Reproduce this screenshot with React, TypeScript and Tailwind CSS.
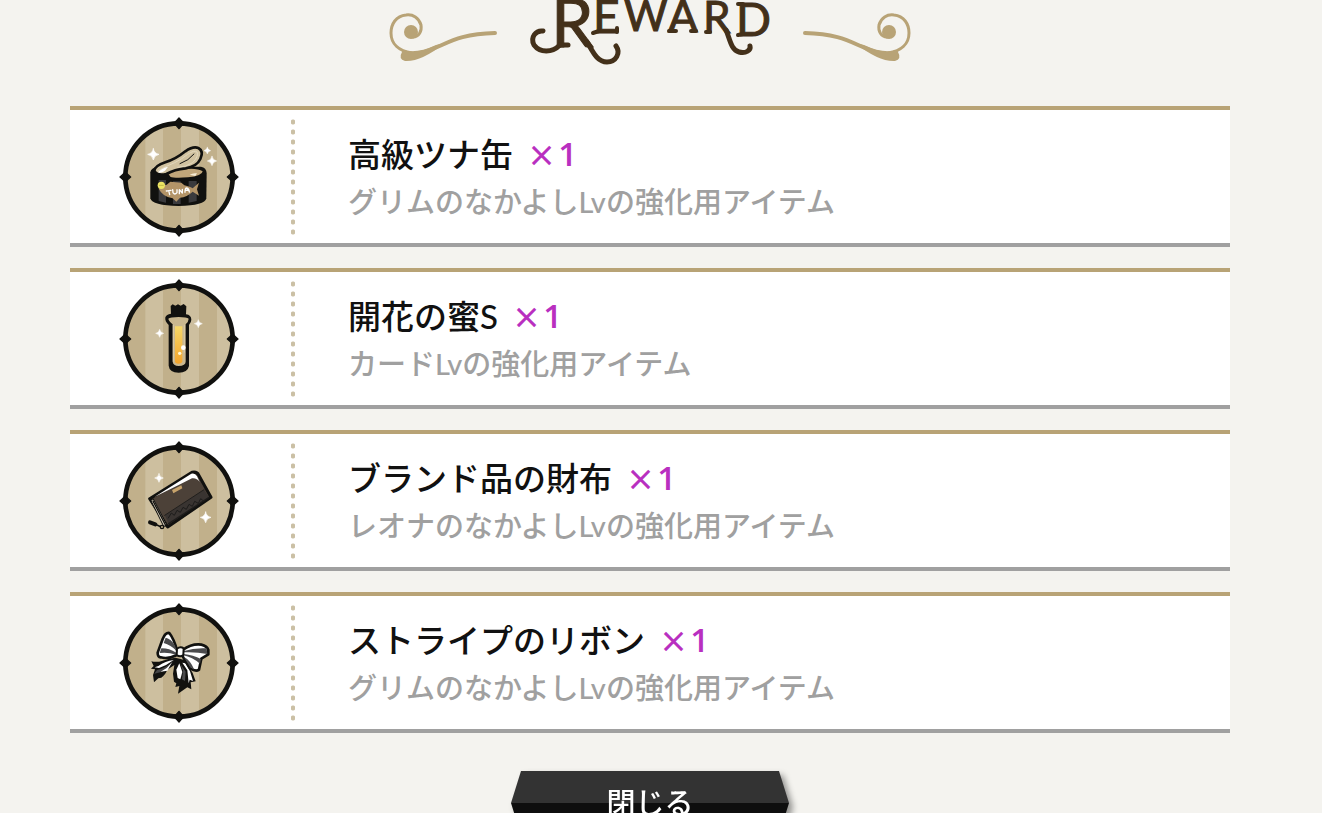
import type { ReactNode } from 'react';

type Reward = {
  name: string;
  count: number;
  description: string;
  icon: ReactNode;
};

const Sparkle = ({ x, y, r }: { x: number; y: number; r: number }) => (
  <path
    transform={`translate(${x} ${y}) scale(${r})`}
    d="M0-1Q.15-.15 1 0Q.15.15 0 1Q-.15.15-1 0Q-.15-.15 0-1Z"
    fill="#fff"
    stroke="#fff"
    strokeWidth=".12"
  />
);

const Diamond = ({ x, y }: { x: number; y: number }) => (
  <path transform={`translate(${x} ${y})`} d="M0-16Q7-7 16 0Q7 7 0 16Q-7 7-16 0Q-7-7 0-16Z" fill="#11110f" stroke="#11110f" strokeWidth="4" strokeLinejoin="round" />
);

const Badge = ({ children }: { children: ReactNode }) => (
  <svg viewBox="26 34 360 360" className="h-[120px] w-[120px]" aria-hidden="true">
    <clipPath id="badge-clip">
      <circle cx="206" cy="214" r="162" />
    </clipPath>
    <g clipPath="url(#badge-clip)">
      <rect x="40" y="40" width="340" height="350" fill="#cdbf9f" />
      <rect x="40" y="40" width="65" height="350" fill="#c1b08b" />
      <rect x="158" y="40" width="54" height="350" fill="#c1b08b" />
      <rect x="266" y="40" width="54" height="350" fill="#c1b08b" />
    </g>
    <circle cx="206" cy="214" r="161" fill="none" stroke="#11110f" strokeWidth="14" />
    <Diamond x={206} y={53} />
    <Diamond x={206} y={375} />
    <Diamond x={45} y={214} />
    <Diamond x={367} y={214} />
    {children}
  </svg>
);

const TunaIcon = () => (
  <g strokeLinejoin="round" strokeLinecap="round">
    <path d="M120 200Q122 186 142 183L272 183Q288 186 289 202L288 278Q284 300 205 301Q125 300 120 278Z" fill="#11110f" />
    <path d="M174 204Q190 193 222 190Q262 186 277 197Q276 211 233 215Q190 218 180 213Z" fill="#c1a67a" />
    <path d="M238 207Q248 201 260 203L255 211Z" fill="#f6ecd5" />
    <path d="M145 223h22v68l-22-5zM188 227h23v68h-23zM235 226h24v60l-24 5z" fill="#3a3a3d" />
    <path d="M132 196Q132 181 165 170Q197 160 225 137Q248 121 264 127Q281 136 270 160Q260 182 226 188Q193 191 168 205Q140 211 132 196Z" fill="#d1c2a0" stroke="#11110f" strokeWidth="8" />
    <path d="M143 195Q172 179 193 171Q215 160 232 146Q252 132 260 139Q266 151 247 171Q228 184 202 185" fill="none" stroke="#e2d7bd" strokeWidth="3" />
    <path d="M209 174Q235 165 251 145" fill="none" stroke="#11110f" strokeWidth="3" />
    <path d="M143 200Q151 189 173 183L164 195Q152 204 143 200Z" fill="#fff" />
    <path d="M145 249Q153 239 169 237L180 228L213 231L222 239Q240 243 247 248L266 231L260 251L266 270L247 258Q230 274 209 276L198 288L187 278Q157 273 145 249Z" fill="#b39468" />
    <g fill="none" stroke="#fff" strokeWidth="4">
      <path d="M168 256l14-2m-7 1 3 12M187 252l1 9q5 8 12 0v-9M207 264v-12l9 10v-11M224 260q0-13 5-13 7 2 8 12m-12-5 11-1" />
    </g>
    <circle cx="153" cy="239" r="11" fill="#ede564" />
    <path d="M147 239h12" stroke="#aaa438" strokeWidth="2" />
    <Sparkle x={129} y={146} r={17} />
    <Sparkle x={291} y={135} r={10} />
    <Sparkle x={305} y={166} r={14} />
  </g>
);

const NectarIcon = () => (
  <g strokeLinejoin="round">
    <linearGradient id="nectar" x1="0" y1="0" x2="0" y2="1">
      <stop offset="0" stopColor="#f6d869" />
      <stop offset="1" stopColor="#f2a42c" />
    </linearGradient>
    <path d="M181 115l6-5 8 4 8-4 8 4 9-5 8 7-1 24q16 2 16 16 0 7-7 16v123q-4 20-31 20-28-1-30-21V172q-12-11-10-23 3-9 17-11z" fill="#11110f" />
    <path d="M174 153q5-5 31-5 25 0 30 5 0 8-9 17v112q0 12-21 13-17-1-18-13V170q-12-10-13-17z" fill="#c9b78f" />
    <path d="M194 176h22v105q-1 7-12 7-10 0-10-7z" fill="url(#nectar)" />
    <path d="M189 171v111M222 171v84" stroke="#d8caaa" strokeWidth="3" />
    <circle cx="219" cy="240" r="7" fill="#fff" />
    <circle cx="208" cy="257" r="5" fill="#fff9d6" />
    <Sparkle x={148} y={197} r={12} />
    <Sparkle x={264} y={168} r={12} />
  </g>
);

const WalletIcon = () => (
  <g strokeLinejoin="round" strokeLinecap="round">
    <path d="M118 207L245 128Q260 125 265 136L302 203L172 292Z" fill="#4c4138" stroke="#11110f" strokeWidth="9" />
    <path d="M132 202L243 132Q254 129 260 140L268 157Q259 144 245 146L205 166Z" fill="#fff" />
    <path d="M164 257L281 180L296 202L174 281Z" fill="#393431" />
    <path d="M163 257L281 180" stroke="#211f1d" strokeWidth="3" />
    <path d="M174 265l9-15 9 7 8-15 10 6 8-15 10 6 8-15 10 6 7-15 11 6 7-14 10 8" fill="none" stroke="#1d1c1b" strokeWidth="3" />
    <path d="M175 282L296 203" stroke="#1d1c1b" strokeWidth="4" />
    <path d="M185 181l28-14 3 9-27 15z" fill="#c7a36b" />
    <path d="M122 213l38 77 10-3-41-79z" fill="#d5cbb7" stroke="#11110f" strokeWidth="3" />
    <path d="M128 214l39 75" stroke="#11110f" strokeWidth="4" />
    <path d="M119 278l16 6" stroke="#11110f" strokeWidth="12" fill="none" />
    <path d="M135 284l16 7" stroke="#11110f" strokeWidth="5" fill="none" />
    <circle cx="155" cy="292" r="5" fill="#c1b08b" stroke="#11110f" strokeWidth="4" />
    <Sparkle x={146} y={145} r={13} />
    <Sparkle x={286} y={263} r={16} />
  </g>
);

const RibbonIcon = () => (
  <g strokeLinejoin="round">
    <path d="M195 198Q172 201 157 207Q139 213 123 209L130 223L122 231L134 233L128 250L131 272L144 260L153 258Q168 246 170 235L192 220L188 246L191 270L198 275L195 286L207 283L203 306L216 297L231 287L243 293L241 272L256 269L247 244L223 205Z" fill="#11110f" />
    <path d="M190 205Q165 208 144 223L133 227L146 229Q168 222 190 205Z" fill="#fff" />
    <path d="M190 207Q168 228 140 235L132 246L153 241Q174 231 190 207Z" fill="#454547" />
    <path d="M185 212L169 229L151 240L171 237Z" fill="#fff" />
    <path d="M207 215L198 234L202 259L210 263L216 241Z" fill="#fff" />
    <path d="M210 216L218 238L215 263L224 268L226 240Z" fill="#4b4b4d" />
    <path d="M216 213L231 236L235 275L238 264L248 268L239 239L225 215Z" fill="#fff" />
    <path d="M201 178Q190 140 177 124Q165 122 157 142L142 183Q142 196 151 197Q174 203 200 190Z" fill="#fff" stroke="#11110f" strokeWidth="8" />
    <path d="M166 138Q183 142 193 160L200 179Q181 159 160 154ZM153 170Q174 169 198 183L197 189Q174 181 148 184Z" fill="#4b4b4d" />
    <path d="M217 175Q245 155 273 159Q290 163 294 175L294 188L273 201L266 234Q257 241 239 230L217 194Z" fill="#fff" stroke="#11110f" strokeWidth="8" />
    <path d="M221 178Q251 168 289 170L291 187Q256 180 221 182ZM220 187Q249 190 272 202L269 216Q246 197 219 191ZM220 195Q240 205 252 234L239 226Z" fill="#4b4b4d" />
    <path d="M200 171Q210 163 220 170L219 190Q210 198 199 190Z" fill="#fff" stroke="#11110f" strokeWidth="6" />
  </g>
);

const rewards: Reward[] = [
  { name: '高級ツナ缶', count: 1, description: 'グリムのなかよしLvの強化用アイテム', icon: <TunaIcon /> },
  { name: '開花の蜜S', count: 1, description: 'カードLvの強化用アイテム', icon: <NectarIcon /> },
  { name: 'ブランド品の財布', count: 1, description: 'レオナのなかよしLvの強化用アイテム', icon: <WalletIcon /> },
  { name: 'ストライプのリボン', count: 1, description: 'グリムのなかよしLvの強化用アイテム', icon: <RibbonIcon /> },
];

const Flourish = ({ className = '' }: { className?: string }) => (
  <svg viewBox="387 8 112 56" className={`h-14 w-28 ${className}`} aria-hidden="true">
    <g fill="none" stroke="#b8a376" strokeLinecap="round">
      <path d="M413 37C419 37 422 31 421 25C419 18 413 14 406 15C396 16 391 24 391 33C391 44 399 51 412 53" strokeWidth="3" />
      <path d="M420 53C445 47 452 34 495 33" strokeWidth="4" />
    </g>
    <circle cx="411" cy="32" r="7" fill="#b8a376" />
    <path d="M403 50Q417 54 436 45L445 43Q421 62 405 61Q398 59 402 52Z" fill="#b8a376" />
  </svg>
);

const Title = () => (
  <h1>
    <svg viewBox="528 0 246 70" className="h-[70px] w-[246px]" role="img" aria-label="REWARD">
      <g fill="#43301a" stroke="#43301a" strokeWidth="1" className="font-[Lato,sans-serif]">
        <text x="552" y="47" fontSize="68">R</text>
        <text x="594" y="33" fontSize="46">E</text>
        <text x="625" y="31" fontSize="42">W</text>
        <text x="669" y="32" fontSize="44">A</text>
        <text x="704" y="33" fontSize="44">R</text>
        <text x="737" y="36" fontSize="46">D</text>
      </g>
      <g fill="none" stroke="#43301a" strokeWidth="5" strokeLinecap="round">
        <path d="M561 45C553 53 541 53 535 45C531 37 537 30 544 31" />
        <path d="M561 45H569" />
        <path d="M588 42C594 52 598 62 608 62C617 62 622 53 617 46" />
        <path d="M727 30C731 39 732 50 740 52C747 54 752 50 751 46" />
        <path d="M594 33L600 31M618 28V32M670 31H677M692 31H697M707 32H711M739 35L744 34M739 4H744" strokeWidth="4" />
      </g>
    </svg>
  </h1>
);

const RewardRow = ({ reward }: { reward: Reward }) => (
  <li className="flex items-center border-y-4 border-t-[#b8a376] border-b-[#a0a0a0] bg-white py-[6px] pl-[49px]">
    <Badge>{reward.icon}</Badge>
    <div className="mr-[53px] ml-[52px] h-[120px] w-1 shrink-0 bg-[radial-gradient(circle,#cbc0a5_2px,transparent_3px)] bg-[length:4px_10px]" />
    <div className="flex h-[121px] flex-col justify-center pt-[2px]">
      <h2 className="flex gap-4 text-[33px] leading-[48px] font-medium text-[#111]">
        {reward.name}
        <span className="flex items-center gap-1 font-['Open_Sans',sans-serif] text-[#b92fc0]">
          <span className="text-[44px] font-normal">×</span>
          <span className="font-semibold">{reward.count}</span>
        </span>
      </h2>
      <p className="text-[29px] leading-[48px] font-medium text-[#a0a0a0]">{reward.description}</p>
    </div>
  </li>
);

export default function App() {
  return (
    <main className="h-screen overflow-hidden bg-[#f4f3ef] pr-[92px] pl-[70px] font-[Lato,'Noto_Sans_CJK_JP',sans-serif]">
      <header className="flex h-[106px] items-start justify-center gap-[28px]">
        <Flourish className="mt-2" />
        <Title />
        <Flourish className="mt-2 -scale-x-100" />
      </header>
      <ul className="flex flex-col gap-[21px]">
        {rewards.map((reward) => (
          <RewardRow key={reward.name} reward={reward} />
        ))}
      </ul>
      <div className="mt-[38px] flex justify-center drop-shadow-[4px_4px_3px_rgba(0,0,0,0.4)]">
        <button
          type="button"
          className="h-16 w-[278px] bg-linear-to-b from-[#333] from-50% to-[#0e0e0e] to-50% text-[29px] font-medium text-white [clip-path:polygon(10px_0,calc(100%-10px)_0,100%_50%,calc(100%-10px)_100%,10px_100%,0_50%)]"
        >
          閉じる
        </button>
      </div>
    </main>
  );
}
